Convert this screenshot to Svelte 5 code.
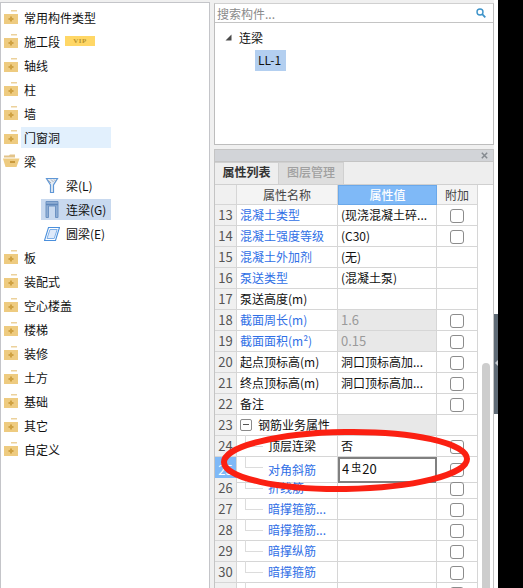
<script>
  const types = [
    { name: '常用构件类型' },
    { name: '施工段', vip: true },
    { name: '轴线' },
    { name: '柱' },
    { name: '墙' },
    { name: '门窗洞', hover: true },
    { name: '梁', open: true },
    { name: '梁(L)', child: 'l' },
    { name: '连梁(G)', child: 'g', selected: true },
    { name: '圆梁(E)', child: 'e' },
    { name: '板' },
    { name: '装配式' },
    { name: '空心楼盖' },
    { name: '楼梯' },
    { name: '装修' },
    { name: '土方' },
    { name: '基础' },
    { name: '其它' },
    { name: '自定义' }
  ];

  const rows = [
    { n: 13, name: '混凝土类型', value: '(现浇混凝土碎...', blue: true, check: true },
    { n: 14, name: '混凝土强度等级', value: '(C30)', blue: true, check: true },
    { n: 15, name: '混凝土外加剂', value: '(无)', blue: true },
    { n: 16, name: '泵送类型', value: '(混凝土泵)', blue: true },
    { n: 17, name: '泵送高度(m)', value: '' },
    { n: 18, name: '截面周长(m)', value: '1.6', blue: true, check: true, gray: true },
    { n: 19, name: '截面面积(m²)', value: '0.15', blue: true, check: true, gray: true },
    { n: 20, name: '起点顶标高(m)', value: '洞口顶标高加...', check: true },
    { n: 21, name: '终点顶标高(m)', value: '洞口顶标高加...', check: true },
    { n: 22, name: '备注', value: '', check: true },
    { n: 23, name: '钢筋业务属性', value: '', group: true, grayEmpty: true },
    { n: 24, name: '顶层连梁', value: '否', child: true, check: true },
    { n: 25, name: '对角斜筋', value: '', blue: true, child: true, check: true, editing: true },
    { n: 26, name: '折线筋', value: '', blue: true, child: true, check: true },
    { n: 27, name: '暗撑箍筋...', value: '', blue: true, child: true, check: true },
    { n: 28, name: '暗撑箍筋...', value: '', blue: true, child: true, check: true },
    { n: 29, name: '暗撑纵筋', value: '', blue: true, child: true, check: true },
    { n: 30, name: '暗撑箍筋', value: '', blue: true, child: true, check: true },
    { n: '', name: '', value: '', child: true, check: true }
  ];
</script>

<div class="screen">
  <aside class="types">
    {#each types as t}
      <div class="type-row" class:sub={t.child}>
        {#if t.child === 'l'}
          <svg class="sub-icon" width="16" height="17" viewBox="0 0 16 17">
            <path d="M2.500 1.500h11L9.500 8v7.500h-3V8z" fill="#e4ebf3" stroke="#5f97d6" stroke-width="1.200" />
            <path d="M4 3l3 3M7 2.500l2.500 2.500M10 2.500l1.500 1.500" stroke="#a9aeb5" stroke-width="1" />
          </svg>
        {:else if t.child === 'g'}
          <svg class="sub-icon" width="16" height="17" viewBox="0 0 16 17">
            <path d="M2 .5h12v16h-2.500V5h-7v11.500H2z" fill="#8fadd3" stroke="#6d93c3" />
            <path d="M2 3.500h12" stroke="#5f87ba" stroke-width="1.500" />
          </svg>
        {:else if t.child === 'e'}
          <svg class="sub-icon" width="16" height="17" viewBox="0 0 16 17">
            <path d="M4.500 2.500h11l-4 13H.5z" fill="#fff" stroke="#4a8fdc" stroke-width="1.100" />
            <path d="M6 4.500h7.200l-3 9H3z" fill="#dfeafa" stroke="#7fb0e8" stroke-width="1" />
          </svg>
        {:else if t.open}
          <svg class="folder-open" width="17" height="14" viewBox="0 0 17 14">
            <path d="M1 1.500h5l1-1h5v3H1z" fill="#e3c489" />
            <path d="M0 4.500h12l4.500 0-3 8.500H2.500z" fill="#eecb80" />
            <path d="M7 8h5" stroke="#c9993c" stroke-width="2" />
          </svg>
        {:else}
          <svg class="folder" width="14" height="14" viewBox="0 0 14 14">
            <rect x="7" y="0" width="6" height="1.500" fill="#ecd19b" />
            <rect x="0" y="4" width="14" height="10" fill="#eecb80" />
            <path d="M7 6.500v5M4.500 9h5" stroke="#cfa142" stroke-width="2" />
          </svg>
        {/if}
        <span class="type-name" class:hover={t.hover} class:selected={t.selected}>{t.name}</span>
        {#if t.vip}<span class="vip">VIP</span>{/if}
      </div>
    {/each}
  </aside>

  <main class="side">
    <section class="picker">
      <div class="search">
        <span>搜索构件...</span>
        <svg width="10" height="10" viewBox="0 0 10 10">
          <circle cx="4" cy="4" r="3" fill="none" stroke="#3d93c9" stroke-width="1.400" />
          <path d="M6.200 6.200L9.300 9.300" stroke="#3d93c9" stroke-width="1.800" />
        </svg>
      </div>
      <div class="tree">
        <div class="tree-root">
          <svg width="7" height="7" viewBox="0 0 7 7"><path d="M6.500.5v6H.5z" fill="#4a4a4a" /></svg>
          <span>连梁</span>
        </div>
        <div class="tree-item">LL-1</div>
      </div>
    </section>

    <section class="props">
      <div class="props-bar">
        <svg width="7" height="7" viewBox="0 0 7 7"><path d="M.8.800l5.400 5.400M6.200.800L.8 6.200" stroke="#858a90" stroke-width="1.500" /></svg>
      </div>
      <div class="tabs">
        <span class="tab active">属性列表</span>
        <span class="tab">图层管理</span>
      </div>
      <div class="table-wrap">
        <div class="table">
          <div class="row head">
            <div class="cell num"></div>
            <div class="cell center">属性名称</div>
            <div class="cell center value-head">属性值</div>
            <div class="cell center">附加</div>
          </div>
          {#each rows as r}
            <div class="row">
              <div class="cell num" class:current={r.editing}>{r.n}</div>
              <div class="cell name" class:blue={r.blue} class:nested={r.child} class:group={r.group}>
                {#if r.child}<i class="branch"></i>{/if}
                {#if r.group}<i class="minus"></i>{/if}
                <span>{r.name}</span>
              </div>
              <div class="cell" class:disabled={r.gray} class:empty-gray={r.grayEmpty} class:editing={r.editing}>
                {#if r.editing}4<span class="rebar">虫</span>20{:else}{r.value}{/if}
              </div>
              <div class="cell center">
                {#if r.check}<i class="check"></i>{/if}
              </div>
            </div>
          {/each}
        </div>
        <div class="scroll"><div class="thumb"></div></div>
      </div>
    </section>
  </main>

  <div class="strip">
    <div class="handle"><i></i></div>
  </div>
  <div class="outside"></div>

  <svg class="mark" width="270" height="85" viewBox="0 0 270 85">
    <ellipse cx="130.500" cy="40.500" rx="121.500" ry="28.500" fill="none" stroke="#fb2012" stroke-width="6" transform="rotate(-0.800 130.500 40.500)" />
  </svg>
</div>

<style>
  :global(body) {
    margin: 0;
  }

  .screen {
    position: relative;
    display: flex;
    width: 523px;
    height: 588px;
    overflow: hidden;
    background: #f0f0f0;
    font-family: "Noto Sans CJK SC", "Liberation Sans", sans-serif;
    font-size: 12px;
    color: #111;
  }

  .types {
    box-sizing: border-box;
    flex: none;
    width: 210px;
    height: 586px;
    margin: 2px 4px 0 0;
    padding-top: 2px;
    background: #fff;
    border: 1px solid #c4c5c9;
    border-width: 1px 1px 0 1px;
  }

  .type-row {
    display: flex;
    align-items: center;
    height: 24px;
    padding-left: 3px;
  }

  .type-row.sub {
    padding-left: 43px;
  }

  .folder {
    flex: none;
    margin-right: 3px;
  }

  .folder-open {
    flex: none;
    margin-left: -1px;
    margin-right: 1px;
  }

  .sub-icon {
    position: relative;
    z-index: 1;
    flex: none;
    margin-right: 6px;
  }

  .type-name {
    display: flex;
    align-items: center;
    height: 21px;
    margin-left: 3px;
  }

  .sub .type-name {
    margin-left: 0;
  }

  .type-name.hover {
    width: 87px;
    margin-left: 0;
    padding-left: 3px;
    background: #e2f0fd;
  }

  .type-name.selected {
    position: relative;
    width: 45px;
    background: #c8d9ef;
    box-shadow: -25px 0 0 #c8d9ef;
  }

  .vip {
    width: 30px;
    height: 10px;
    margin-left: 5px;
    background: #ffd766;
    color: #b8932c;
    font: bold 7px/10px "Liberation Serif", serif;
    letter-spacing: 0.5px;
    text-align: center;
  }

  .side {
    display: flex;
    flex: none;
    flex-direction: column;
    width: 280px;
    height: 588px;
  }

  .picker {
    box-sizing: border-box;
    height: 142px;
    margin-top: 3px;
    background: #fff;
    border: 1px solid #bdbdbd;
    border-top-color: #d0d0d0;
  }

  .search {
    display: flex;
    align-items: center;
    justify-content: space-between;
    box-sizing: border-box;
    height: 19px;
    padding: 0 7px 0 2px;
    border-bottom: 1px solid #c4c4c4;
    color: #8a8a8a;
  }

  .tree {
    padding: 2px 0 0 10px;
  }

  .tree-root {
    display: flex;
    align-items: center;
    gap: 7px;
    height: 24px;
  }

  .tree-item {
    width: 28px;
    height: 21px;
    margin: 1px 0 0 30px;
    padding-left: 3px;
    background: #b3cff0;
    line-height: 20px;
  }

  .props {
    display: flex;
    flex: 1;
    flex-direction: column;
    min-height: 0;
    margin-top: 4px;
    background: #fff;
    border: 1px solid #c4c4c4;
    border-bottom: none;
  }

  .props-bar {
    display: flex;
    align-items: center;
    justify-content: flex-end;
    flex: none;
    height: 11px;
    padding-right: 5px;
    background: #d2d4d8;
    border-bottom: 1px solid #c4c4c4;
  }

  .tabs {
    display: flex;
    flex: none;
    box-sizing: border-box;
    height: 23px;
    background: #eee;
    border-bottom: 1px solid #d0d0d0;
  }

  .tab {
    box-sizing: border-box;
    width: 65px;
    background: #dedede;
    border: 1px solid #d0d0d0;
    border-width: 1px 1px 0 0;
    color: #a0a0a0;
    font-weight: 500;
    line-height: 18px;
    text-align: center;
  }

  .tab.active {
    width: 64px;
    background: #eee;
    color: #333;
    font-weight: 700;
  }

  .table-wrap {
    display: flex;
    flex: 1;
    min-height: 0;
  }

  .table {
    flex: none;
    width: 263px;
  }

  .row {
    display: grid;
    grid-template-columns: 22px 101px 99px 41px;
    height: 21px;
  }

  .row.head {
    height: 20px;
  }

  .cell {
    display: flex;
    align-items: center;
    box-sizing: border-box;
    min-width: 0;
    padding-left: 3px;
    padding-bottom: 1px;
    border-right: 1px solid #d6d6d6;
    border-bottom: 1px solid #d6d6d6;
    white-space: nowrap;
  }

  .center {
    justify-content: center;
    padding-left: 0;
  }

  .head .cell {
    background: #f4f4f4;
    color: #444;
  }

  .head .value-head {
    background: #7fb9f7;
    border: 1px solid #6aa8ea;
    color: #fff;
    font-weight: 500;
  }

  .num,
  .head .num {
    justify-content: center;
    padding-left: 0;
    background: #f0f0f0;
    color: #555;
    font-size: 13px;
  }

  .num.current {
    background: #7fb9f7;
    color: #fff;
  }

  .blue {
    color: #2f6fe6;
  }

  .disabled {
    background: #e8e8e8;
    color: #9a9a9a;
    font-size: 13px;
  }

  .empty-gray {
    background: #e8e8e8;
  }

  .cell.editing {
    background: #fff;
    border: 2px solid #808080;
    padding-left: 2px;
    padding-bottom: 3px;
    font-size: 13px;
  }

  .rebar {
    position: relative;
    top: -2px;
    margin: 0 1px 0 2px;
    font-size: 10px;
  }

  .nested {
    position: relative;
    padding-left: 31px;
  }

  .branch {
    position: absolute;
    top: -1px;
    left: 8px;
    width: 17px;
    height: 11px;
    border-left: 1px solid #dcdcdc;
    border-bottom: 1px solid #dcdcdc;
  }

  .group {
    gap: 6px;
  }

  .minus {
    position: relative;
    flex: none;
    box-sizing: border-box;
    width: 12px;
    height: 12px;
    background: linear-gradient(#555, #555) center / 6px 1px no-repeat;
    border: 1px solid #8a8a8a;
    border-radius: 2px;
  }

  .check {
    box-sizing: border-box;
    width: 14px;
    height: 14px;
    margin-top: 2px;
    background: #fff;
    border: 1px solid #8c8c8c;
    border-radius: 3px;
  }

  .scroll {
    flex: 1;
    padding: 178px 3px 0 4px;
  }

  .thumb {
    height: 100%;
    background: #cdcdcd;
    border-radius: 4px 4px 0 0;
  }

  .strip {
    position: relative;
    flex: none;
    width: 4px;
    background: #fff;
  }

  .handle {
    position: relative;
    width: 4px;
    height: 100px;
    margin-top: 314px;
    background: #5f6b76;
  }

  .handle i {
    position: absolute;
    top: 46px;
    left: 1px;
    border: 3px solid transparent;
    border-right-color: #c9ced3;
    border-left: 0;
  }

  .outside {
    flex: 1;
    background: #000;
  }

  .mark {
    position: absolute;
    top: 420px;
    left: 215px;
    pointer-events: none;
  }
</style>
